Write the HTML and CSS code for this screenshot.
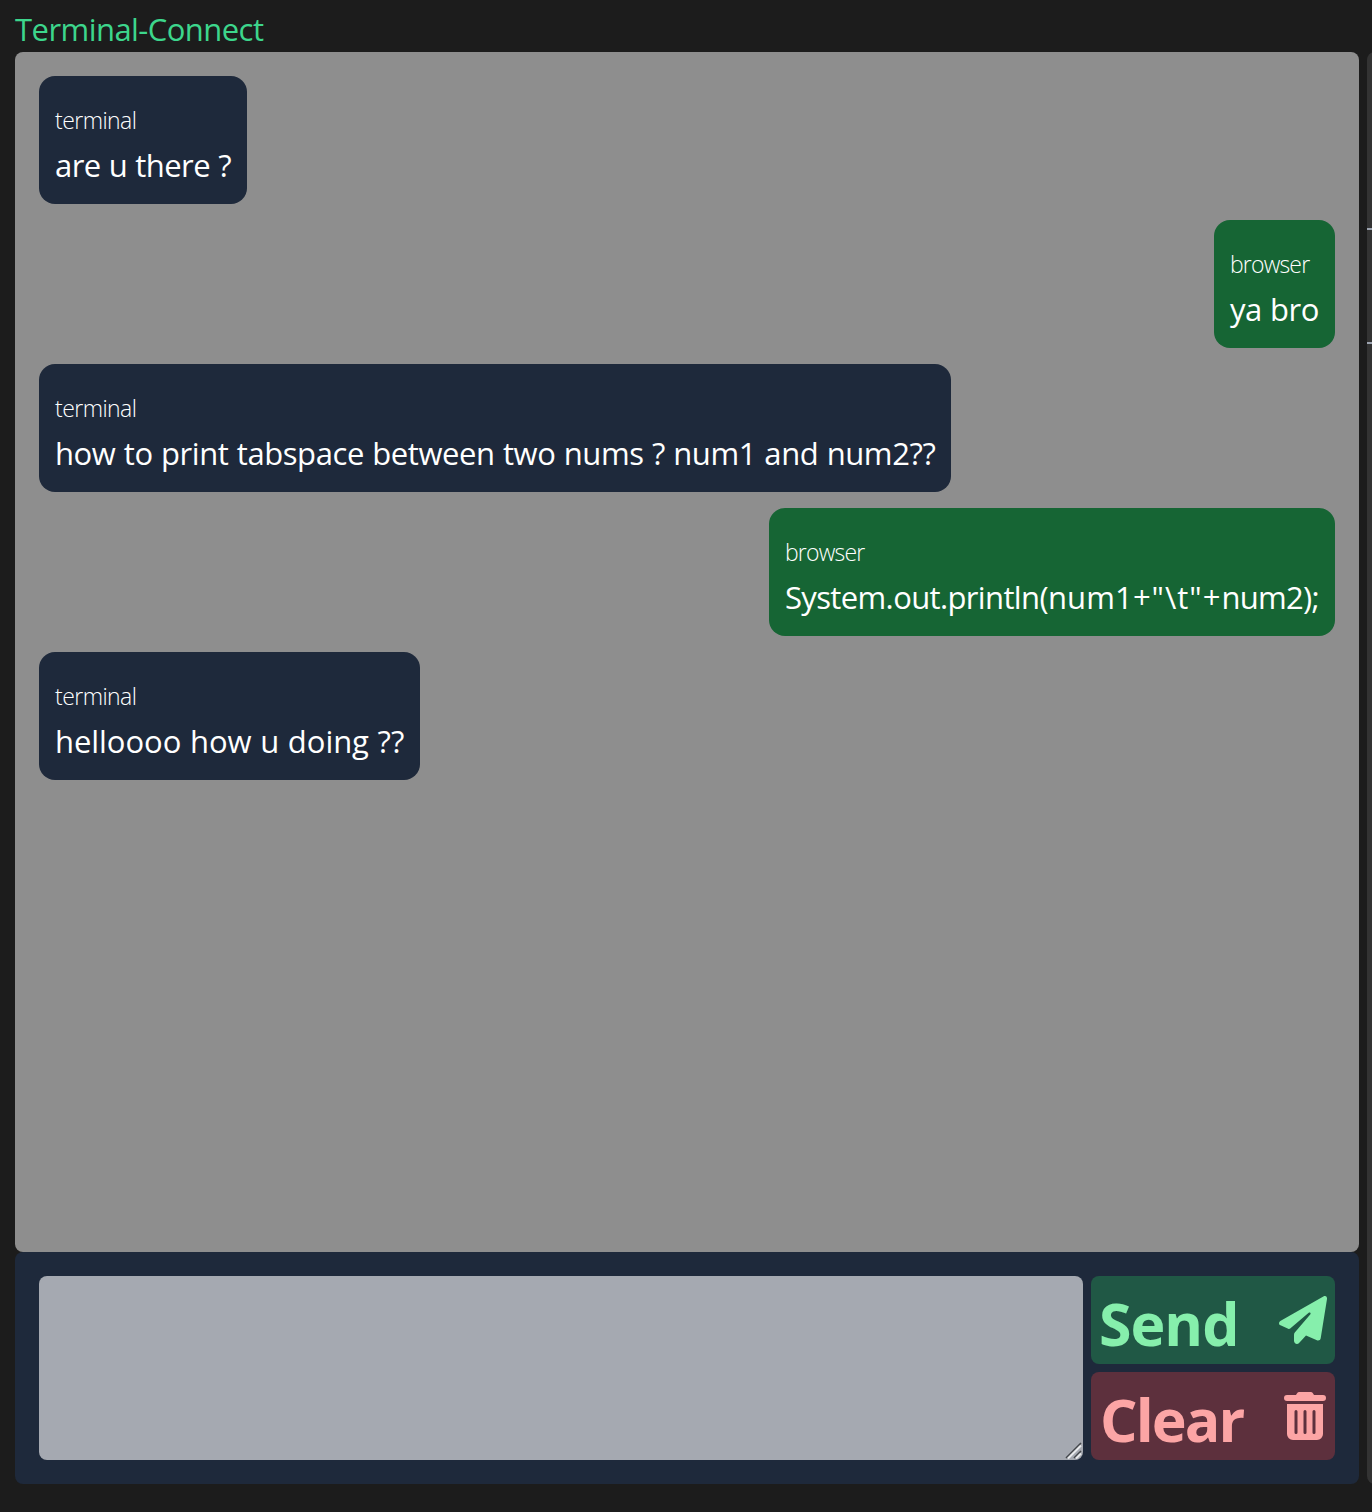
FILE: index.html
```html
<!DOCTYPE html>
<html lang="en">
<head>
<meta charset="utf-8">
<title>Terminal-Connect</title>
<link rel="stylesheet" href="styles.css">
</head>
<body>
<div class="layout">
  <main class="chat">
    <h1 class="title">Terminal-Connect</h1>
    <section class="messages">
      <article class="bubble terminal"><span class="sender">terminal</span><p class="text short">are u there ?</p></article>
      <article class="bubble browser"><span class="sender">browser</span><p class="text reply">ya bro</p></article>
      <article class="bubble terminal"><span class="sender">terminal</span><p class="text question">how to print tabspace between two nums ? num1 and num2??</p></article>
      <article class="bubble browser"><span class="sender">browser</span><p class="text code"><span class="call">System.out.println(</span>num1<span class="join">+"\t"+</span><span class="tail">num2);</span></p></article>
      <article class="bubble terminal"><span class="sender">terminal</span><p class="text greeting">helloooo how u doing ??</p></article>
    </section>
    <form class="composer">
      <div class="field">
        <textarea class="input" aria-label="Message"></textarea>
        <svg class="grip" viewBox="0 0 18 18" width="18" height="18" fill="none" stroke-width="1.6">
          <path d="M1 16 16 1M9 16 16 9" stroke="#45484c"/>
          <path d="M3 16.5 16 3.5M11 16.5 16 11.5" stroke="#e8eaec" stroke-width="2"/>
        </svg>
      </div>
      <div class="actions">
        <button class="button send" type="button"><span class="label">Send</span>
          <svg class="icon" viewBox="0 0 48 48" width="48" height="48" fill="currentColor"><path d="M44.8.3 1.3 25.1C-.5 26.2-.4 28.5 1.5 29.3L9.2 32.8Q10.3 33.3 11.2 32.5L29.7 16.8C30.8 15.9 32.2 17.1 31.4 18.2L15.8 36.6Q15 37.6 15 39V44.8C15 47.8 18.4 49 20.3 46.7L27 39.6 37.9 44.3C39.6 45 41.4 44.1 41.7 42.3L48 3.1C48.4.8 46.5-.7 44.8.3Z"/></svg>
        </button>
        <button class="button clear" type="button"><span class="label">Clear</span>
          <svg class="icon trash" viewBox="0 0 42 48" width="42" height="48" fill="currentColor"><path d="M3 3H12L13.1 1.2Q13.8 0 15.3 0H26.7Q28.2 0 28.9 1.2L30 3H39A3 3 0 0 1 39 9H3A3 3 0 0 1 3 3Z"/><path fill-rule="evenodd" d="M3 12H39V42A6 6 0 0 1 33 48H9A6 6 0 0 1 3 42ZM12 18A1.5 1.5 0 0 0 10.5 19.5V40.5A1.5 1.5 0 0 0 13.5 40.5V19.5A1.5 1.5 0 0 0 12 18ZM21 18A1.5 1.5 0 0 0 19.5 19.5V40.5A1.5 1.5 0 0 0 22.5 40.5V19.5A1.5 1.5 0 0 0 21 18ZM30 18A1.5 1.5 0 0 0 28.5 19.5V40.5A1.5 1.5 0 0 0 31.5 40.5V19.5A1.5 1.5 0 0 0 30 18Z"/></svg>
        </button>
      </div>
    </form>
  </main>
  <aside class="side"><div class="side-box"></div></aside>
</div>
</body>
</html>
```
FILE: styles.css
```css
* { box-sizing: border-box; }
body { margin: 0; background: #1c1c1c; font-family: "Open Sans", "Noto Sans", sans-serif; color: #fff; overflow: hidden; }
.layout { display: flex; gap: 8px; width: 1420px; height: 1512px; padding: 8px 0 0 15px; }
.chat { width: 1344px; flex: none; display: flex; flex-direction: column; }
.title { margin: 0; height: 44px; font-size: 31px; line-height: 42px; font-weight: 400; letter-spacing: -.55px; color: #3dd68c; white-space: nowrap; }
.messages { height: 1200px; padding: 24px; border-radius: 8px; background: #8e8e8e; display: flex; flex-direction: column; gap: 16px; }
.bubble { height: 128px; padding: 23px 16px 15px; border-radius: 16px; }
.terminal { align-self: flex-start; background: #1e293b; }
.browser { align-self: flex-end; background: #166534; }
.sender { display: block; font-size: 23px; line-height: 42px; font-weight: 300; letter-spacing: -.55px; }
.browser .sender { letter-spacing: -.8px; }
.text { margin: 0; font-size: 31px; line-height: 48px; word-spacing: .7px; white-space: nowrap; }
.short { letter-spacing: -.58px; }
.reply { letter-spacing: -.45px; }
.question { letter-spacing: -.415px; }
.code { letter-spacing: .12px; }
.call { letter-spacing: -.63px; }
.join { letter-spacing: 1px; }
.tail { letter-spacing: -.7px; }
.greeting { letter-spacing: -.05px; }
.composer { height: 232px; padding: 24px; border-radius: 8px; background: #1e293b; display: flex; gap: 8px; }
.field { position: relative; width: 1044px; height: 184px; }
.input { display: block; width: 100%; height: 100%; border: 0; border-radius: 8px; background: #a5a9b1; resize: none; }
.grip { position: absolute; right: 0; bottom: 0; }
.actions { width: 244px; display: flex; flex-direction: column; gap: 8px; }
.button { height: 88px; padding: 0 8px; border: 0; border-radius: 8px; display: flex; align-items: center; justify-content: space-between; font: 700 59px/88px "Open Sans", "Noto Sans", sans-serif; }
.label { line-height: 88px; padding-top: 6px; }
.send { background: #205845; color: #86efac; }
.send .label { letter-spacing: -1px; }
.clear { padding-left: 9px; background: #5d303d; color: #fca5a5; }
.clear .label { letter-spacing: -1.9px; }
.trash { margin-right: 1px; }
.side { width: 61px; height: 1432px; margin-top: 44px; padding-top: 176px; border-radius: 8px; background: #333; }
.side-box { height: 116px; border: solid #9ca3af; border-width: 2px 0; }
```
